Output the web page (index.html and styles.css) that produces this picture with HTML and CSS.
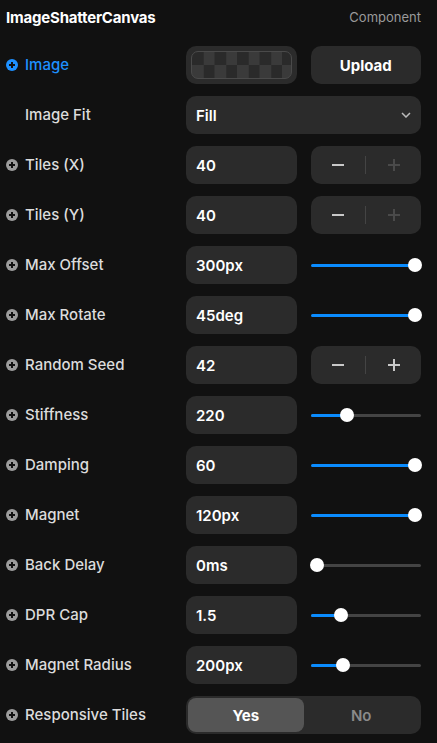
FILE: index.html
```html
<!DOCTYPE html>
<html>
<head>
<meta charset="utf-8">
<link rel="stylesheet" href="styles.css">
</head>
<body>
<div class="panel">
  <div class="header">
    <span class="title">ImageShatterCanvas</span>
    <span class="kind">Component</span>
  </div>

  <div class="row">
    <div class="label active"><svg class="pi" viewBox="0 0 12 12"><circle cx="6" cy="6" r="6"/><path d="M6 3v6M3 6h6" stroke="#111" stroke-width="2"/></svg>Image</div>
    <div class="ctrl split">
      <div class="box thumbbox"><div class="checker"></div></div>
      <div class="box btn">Upload</div>
    </div>
  </div>

  <div class="row">
    <div class="label noicon">Image Fit</div>
    <div class="ctrl">
      <div class="box select">Fill<svg class="chev" viewBox="0 0 10 6"><path d="M1 1l4 4 4-4" fill="none" stroke="#bbb" stroke-width="1.5"/></svg></div>
    </div>
  </div>

  <div class="row">
    <div class="label"><svg class="pi" viewBox="0 0 12 12"><circle cx="6" cy="6" r="6"/><path d="M6 3v6M3 6h6" stroke="#111" stroke-width="2"/></svg>Tiles (X)</div>
    <div class="ctrl split">
      <div class="box val">40</div>
      <div class="box stepper"><span class="minus"></span><span class="div"></span><span class="plus dim"></span></div>
    </div>
  </div>

  <div class="row">
    <div class="label"><svg class="pi" viewBox="0 0 12 12"><circle cx="6" cy="6" r="6"/><path d="M6 3v6M3 6h6" stroke="#111" stroke-width="2"/></svg>Tiles (Y)</div>
    <div class="ctrl split">
      <div class="box val">40</div>
      <div class="box stepper"><span class="minus"></span><span class="div"></span><span class="plus dim"></span></div>
    </div>
  </div>

  <div class="row">
    <div class="label"><svg class="pi" viewBox="0 0 12 12"><circle cx="6" cy="6" r="6"/><path d="M6 3v6M3 6h6" stroke="#111" stroke-width="2"/></svg>Max Offset</div>
    <div class="ctrl split">
      <div class="box val">300px</div>
      <div class="slider"><div class="track"><div class="fill" style="width:100%"></div></div><div class="thumbwrap"><div class="knob" style="left:100%"></div></div></div>
    </div>
  </div>

  <div class="row">
    <div class="label"><svg class="pi" viewBox="0 0 12 12"><circle cx="6" cy="6" r="6"/><path d="M6 3v6M3 6h6" stroke="#111" stroke-width="2"/></svg>Max Rotate</div>
    <div class="ctrl split">
      <div class="box val">45deg</div>
      <div class="slider"><div class="track"><div class="fill" style="width:100%"></div></div><div class="thumbwrap"><div class="knob" style="left:100%"></div></div></div>
    </div>
  </div>

  <div class="row">
    <div class="label"><svg class="pi" viewBox="0 0 12 12"><circle cx="6" cy="6" r="6"/><path d="M6 3v6M3 6h6" stroke="#111" stroke-width="2"/></svg>Random Seed</div>
    <div class="ctrl split">
      <div class="box val">42</div>
      <div class="box stepper"><span class="minus"></span><span class="div"></span><span class="plus"></span></div>
    </div>
  </div>

  <div class="row">
    <div class="label"><svg class="pi" viewBox="0 0 12 12"><circle cx="6" cy="6" r="6"/><path d="M6 3v6M3 6h6" stroke="#111" stroke-width="2"/></svg>Stiffness</div>
    <div class="ctrl split">
      <div class="box val">220</div>
      <div class="slider"><div class="track"><div class="fill" style="width:33%"></div></div><div class="thumbwrap"><div class="knob" style="left:31%"></div></div></div>
    </div>
  </div>

  <div class="row">
    <div class="label"><svg class="pi" viewBox="0 0 12 12"><circle cx="6" cy="6" r="6"/><path d="M6 3v6M3 6h6" stroke="#111" stroke-width="2"/></svg>Damping</div>
    <div class="ctrl split">
      <div class="box val">60</div>
      <div class="slider"><div class="track"><div class="fill" style="width:100%"></div></div><div class="thumbwrap"><div class="knob" style="left:100%"></div></div></div>
    </div>
  </div>

  <div class="row">
    <div class="label"><svg class="pi" viewBox="0 0 12 12"><circle cx="6" cy="6" r="6"/><path d="M6 3v6M3 6h6" stroke="#111" stroke-width="2"/></svg>Magnet</div>
    <div class="ctrl split">
      <div class="box val">120px</div>
      <div class="slider"><div class="track"><div class="fill" style="width:100%"></div></div><div class="thumbwrap"><div class="knob" style="left:100%"></div></div></div>
    </div>
  </div>

  <div class="row">
    <div class="label"><svg class="pi" viewBox="0 0 12 12"><circle cx="6" cy="6" r="6"/><path d="M6 3v6M3 6h6" stroke="#111" stroke-width="2"/></svg>Back Delay</div>
    <div class="ctrl split">
      <div class="box val">0ms</div>
      <div class="slider"><div class="track"><div class="fill" style="width:0%"></div></div><div class="thumbwrap"><div class="knob" style="left:0%"></div></div></div>
    </div>
  </div>

  <div class="row">
    <div class="label"><svg class="pi" viewBox="0 0 12 12"><circle cx="6" cy="6" r="6"/><path d="M6 3v6M3 6h6" stroke="#111" stroke-width="2"/></svg>DPR Cap</div>
    <div class="ctrl split">
      <div class="box val">1.5</div>
      <div class="slider"><div class="track"><div class="fill" style="width:27%"></div></div><div class="thumbwrap"><div class="knob" style="left:25%"></div></div></div>
    </div>
  </div>

  <div class="row">
    <div class="label"><svg class="pi" viewBox="0 0 12 12"><circle cx="6" cy="6" r="6"/><path d="M6 3v6M3 6h6" stroke="#111" stroke-width="2"/></svg>Magnet Radius</div>
    <div class="ctrl split">
      <div class="box val">200px</div>
      <div class="slider"><div class="track"><div class="fill" style="width:29%"></div></div><div class="thumbwrap"><div class="knob" style="left:27%"></div></div></div>
    </div>
  </div>

  <div class="row">
    <div class="label"><svg class="pi" viewBox="0 0 12 12"><circle cx="6" cy="6" r="6"/><path d="M6 3v6M3 6h6" stroke="#111" stroke-width="2"/></svg>Responsive Tiles</div>
    <div class="ctrl">
      <div class="box toggle"><span class="opt on">Yes</span><span class="opt">No</span></div>
    </div>
  </div>
</div>
</body>
</html>
```

FILE: styles.css
```css
* { box-sizing: border-box; }
html, body {
  margin: 0;
  padding: 0;
  background: #111111;
}
body {
  font-family: Inter, "Noto Sans", sans-serif;
  color: #e6e6e6;
  width: 437px;
  height: 743px;
  overflow: hidden;
}
.panel {
  padding: 0 16px 0 6px;
  display: flex;
  flex-direction: column;
  gap: 12px;
}
.header {
  height: 34px;
  display: flex;
  align-items: center;
  justify-content: space-between;
}
.title {
  font-size: 15px;
  font-weight: 700;
  color: #ffffff;
  letter-spacing: -0.2px;
}
.kind {
  font-size: 13px;
  color: #9a9a9a;
}
.row {
  height: 38px;
  display: flex;
  align-items: center;
}
.label {
  width: 180px;
  display: flex;
  align-items: center;
  gap: 7px;
  font-size: 15px;
  font-weight: 500;
  color: #dcdcdc;
  margin-top: -1px;
}
.label .pi {
  width: 12px;
  height: 12px;
  fill: #9c9c9c;
  flex: none;
}
.label.active { color: #1e90ff; }
.label.active .pi { fill: #1e90ff; }
.label.noicon { padding-left: 19px; }
.ctrl {
  flex: 1;
  display: flex;
  align-items: center;
  height: 38px;
}
.ctrl.split {
  display: grid;
  grid-template-columns: 1fr 1fr;
  column-gap: 14px;
}
.box {
  height: 38px;
  border-radius: 10px;
  background: #2b2b2b;
  flex: 1;
  display: flex;
  align-items: center;
  min-width: 0;
}
.val {
  padding-left: 10px;
  font-size: 15px;
  font-weight: 600;
  color: #ffffff;
}
.thumbbox {
  padding: 5px;
}
.checker {
  width: 100%;
  height: 28px;
  border-radius: 7px;
  border: 1px solid #4a4a4a;
  background-color: #2a2a2a;
  background-image:
    conic-gradient(#3a3a3a 25%, #2a2a2a 0 50%, #3a3a3a 0 75%, #2a2a2a 0);
  background-size: 22.5px 26px;
  background-position: 0 0;
}
.btn {
  justify-content: center;
  font-size: 15px;
  font-weight: 700;
  color: #ffffff;
}
.select {
  padding: 0 10px;
  justify-content: space-between;
  font-size: 15px;
  font-weight: 600;
  color: #ffffff;
}
.chev { width: 10px; height: 6px; }
.stepper {
  justify-content: center;
}
.stepper .minus, .stepper .plus {
  width: 55px;
  height: 38px;
  position: relative;
}
.stepper .minus::before, .stepper .plus::before, .stepper .plus::after {
  content: "";
  position: absolute;
  left: 50%;
  top: 50%;
  background: #c8c8c8;
}
.stepper .minus::before, .stepper .plus::before {
  width: 12px;
  height: 2px;
  margin: -1px 0 0 -6px;
}
.stepper .plus::after {
  width: 2px;
  height: 12px;
  margin: -6px 0 0 -1px;
}
.stepper .plus.dim::before, .stepper .plus.dim::after { background: #4a4a4a; }
.stepper .div {
  width: 1px;
  height: 18px;
  background: #444;
}
.slider {
  height: 38px;
  position: relative;
  display: flex;
  align-items: center;
  min-width: 0;
}
.track {
  width: 100%;
  height: 3px;
  border-radius: 2px;
  background: #444444;
  overflow: hidden;
}
.fill {
  height: 100%;
  background: #0a8cff;
}
.thumbwrap {
  position: absolute;
  left: 6px;
  right: 6px;
  top: 0;
  bottom: 0;
}
.knob {
  position: absolute;
  top: 50%;
  width: 14px;
  height: 14px;
  margin: -7px 0 0 -7px;
  border-radius: 50%;
  background: #ffffff;
}
.toggle {
  padding: 2px;
}
.opt {
  flex: 1;
  height: 34px;
  border-radius: 8px;
  display: flex;
  align-items: center;
  justify-content: center;
  font-size: 15px;
  font-weight: 600;
  color: #8a8a8a;
}
.opt.on {
  background: #555555;
  color: #ffffff;
  font-weight: 700;
}
```
